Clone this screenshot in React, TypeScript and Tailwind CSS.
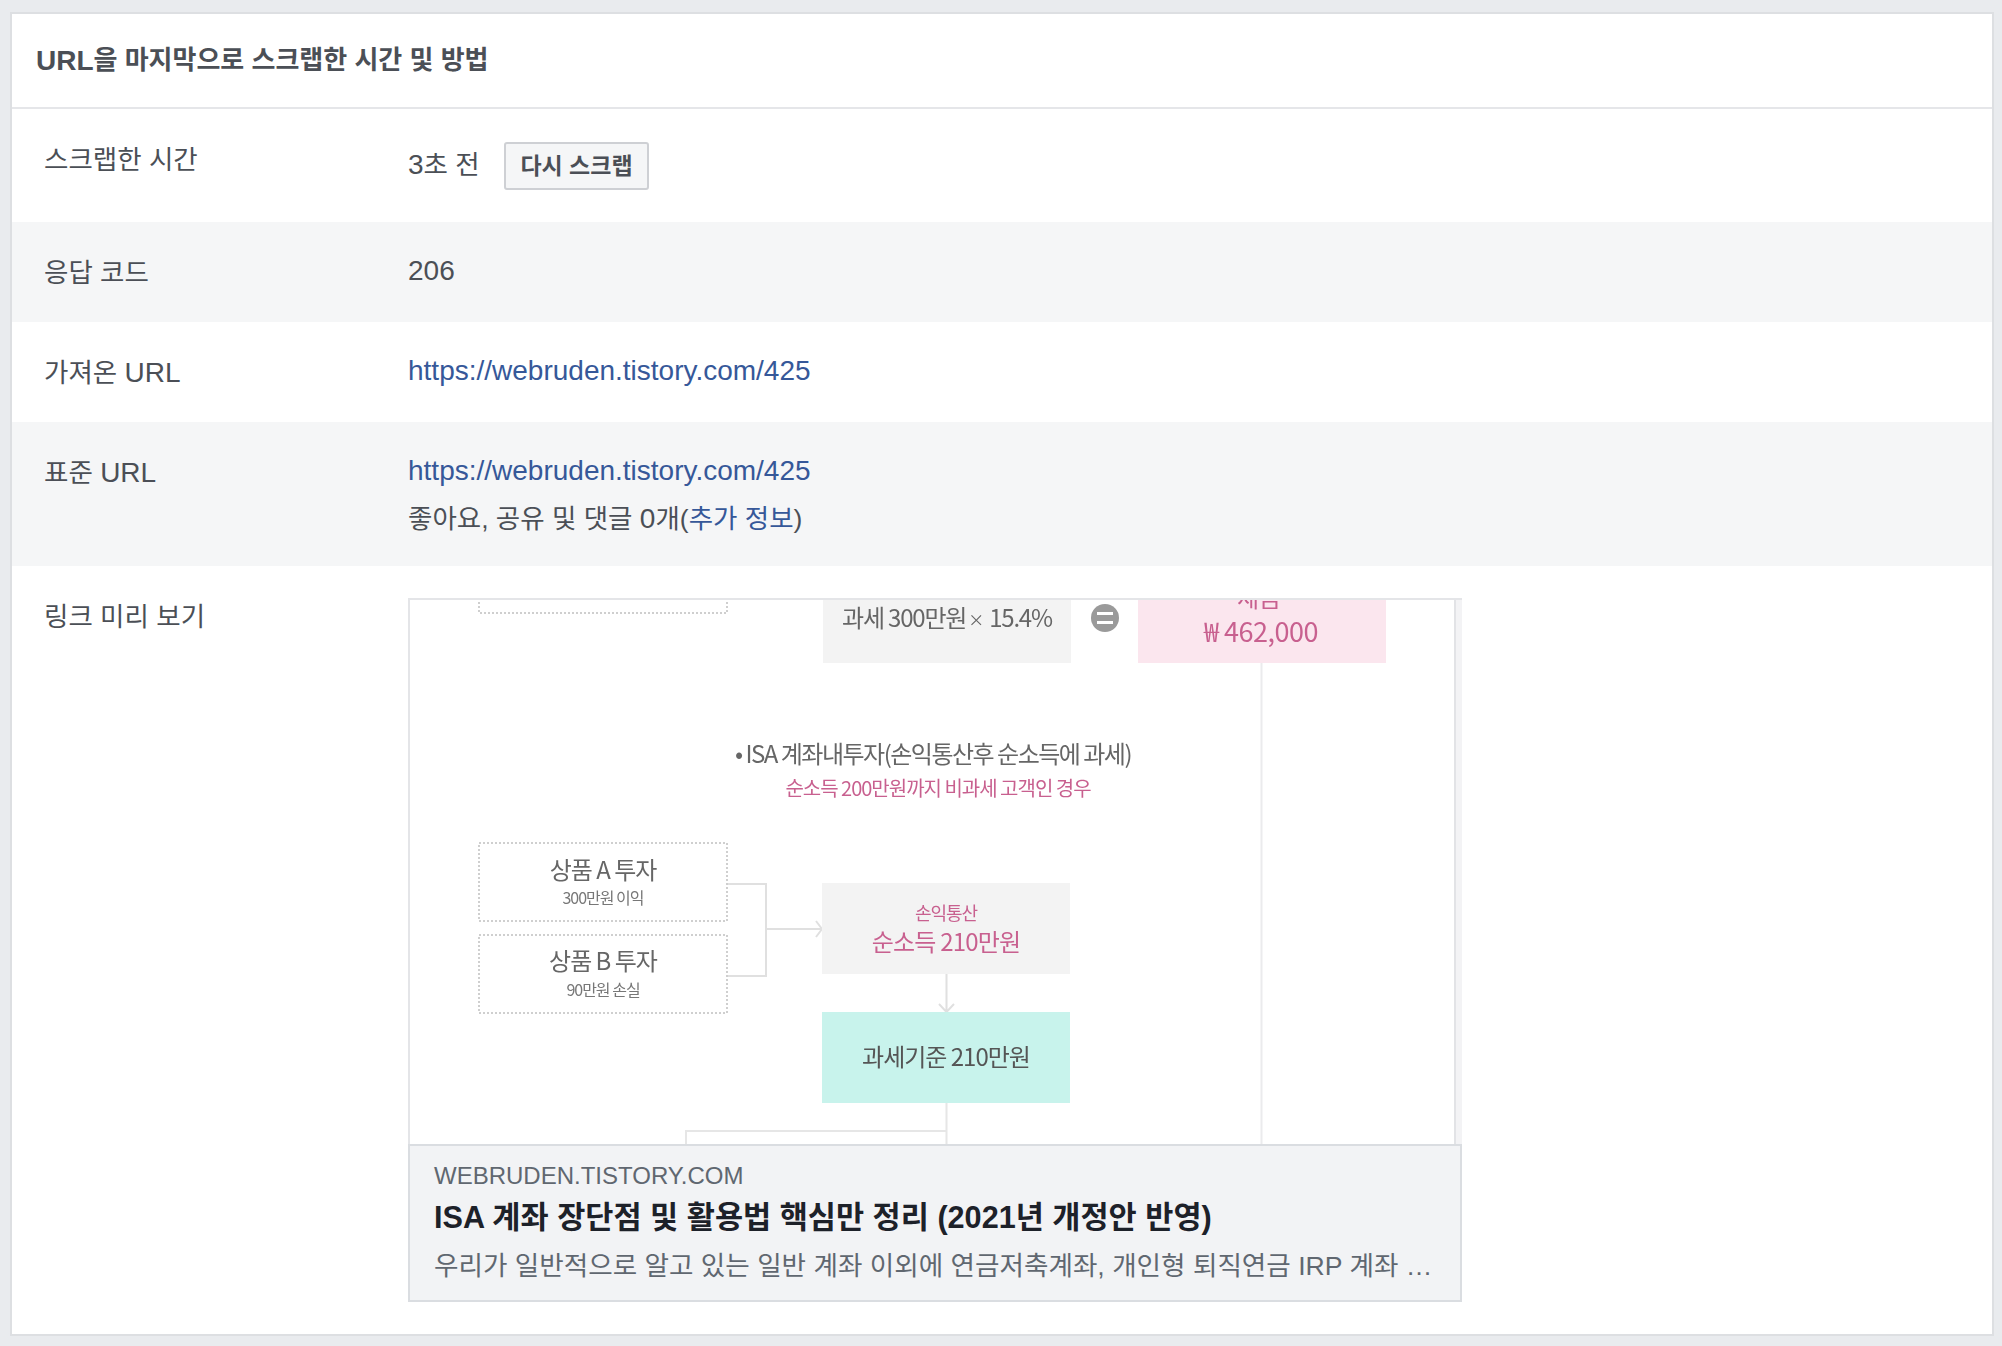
import React from "react";

const FONT = '"Liberation Sans", "Noto Sans CJK KR", sans-serif';

// latin runs sit a bit larger than the korean around them in the reference
function L({ children }: { children: React.ReactNode }) {
  return <span className="text-[28px]">{children}</span>;
}

function Row({ label, shaded, h, children }: { label: React.ReactNode; shaded?: boolean; h: string; children: React.ReactNode }) {
  return (
    <div className={`flex ${h} ${shaded ? "bg-[#f5f6f7]" : "bg-white"}`}>
      <div className="w-[396px] shrink-0 pl-[32px] pt-[31px] text-[26.5px] leading-[40px] text-[#4b4f56]">{label}</div>
      <div className="min-w-0 flex-1 pt-[29px] text-[26.5px] leading-[40px] text-[#4b4f56]">{children}</div>
    </div>
  );
}

function PreviewDiagram() {
  const textFont = { fontFamily: '"Noto Sans CJK KR", sans-serif' };
  return (
    <svg viewBox="408 598 1054 546" className="block h-[546px] w-[1054px] blur-[0.5px]" style={textFont}>
      <rect x="408" y="598" width="1054" height="546" fill="#fff" />
      <rect x="1456" y="598" width="6" height="546" fill="#f3f3f5" />
      <line x1="1455" y1="598" x2="1455" y2="1144" stroke="#e2e3e6" strokeWidth="2" />
      {/* top row */}
      <path d="M479 598V613H727V598" fill="none" stroke="#cfcfcf" strokeWidth="2" strokeDasharray="2 2" />
      <rect x="823" y="598" width="248" height="65" fill="#f3f3f3" />
      <text x="947" y="627" textAnchor="middle" fontSize="24" fill="#666" letterSpacing="-1.2">
        과세 300만원<tspan fontSize="16" dx="2" dy="-1">×</tspan><tspan dx="2" dy="1"> 15.4%</tspan>
      </text>
      <circle cx="1105" cy="618" r="14" fill="#9a9a9a" />
      <rect x="1097" y="612" width="16" height="3" fill="#fff" />
      <rect x="1097" y="621" width="16" height="3" fill="#fff" />
      <rect x="1138" y="598" width="248" height="65" fill="#fbe6ee" />
      <text x="1259" y="607" textAnchor="middle" fontSize="24" fill="#c8608f">세금</text>
      <text x="1261" y="642" textAnchor="middle" fontSize="27" fill="#c8608f" letterSpacing="-0.5">₩ 462,000</text>
      <line x1="1261.5" y1="663" x2="1261.5" y2="1144" stroke="#ebebed" strokeWidth="2" />
      {/* heading */}
      <text x="933" y="763" textAnchor="middle" fontSize="24" fill="#666" letterSpacing="-1.5">• ISA 계좌내투자(손익통산후 순소득에 과세)</text>
      <text x="938" y="796" textAnchor="middle" fontSize="20" fill="#c8608f" letterSpacing="-1">순소득 200만원까지 비과세 고객인 경우</text>
      {/* products */}
      <rect x="479" y="843" width="248" height="78" fill="#fff" stroke="#cfcfcf" strokeWidth="2" strokeDasharray="2 2" />
      <text x="603" y="879" textAnchor="middle" fontSize="24" fill="#666" letterSpacing="-1">상품 A 투자</text>
      <text x="603" y="904" textAnchor="middle" fontSize="16" fill="#777" letterSpacing="-1">300만원 이익</text>
      <rect x="479" y="935" width="248" height="78" fill="#fff" stroke="#cfcfcf" strokeWidth="2" strokeDasharray="2 2" />
      <text x="603" y="970" textAnchor="middle" fontSize="24" fill="#666" letterSpacing="-1">상품 B 투자</text>
      <text x="603" y="996" textAnchor="middle" fontSize="16" fill="#777" letterSpacing="-1">90만원 손실</text>
      {/* connectors */}
      <path d="M728 884H766V976H728M766 929H822M816 921L822 929L816 937" fill="none" stroke="#e0e0e0" strokeWidth="2" />
      <rect x="822" y="883" width="248" height="91" fill="#f3f3f3" />
      <text x="946" y="920" textAnchor="middle" fontSize="18" fill="#c8608f" letterSpacing="-1">손익통산</text>
      <text x="946" y="951" textAnchor="middle" fontSize="24" fill="#c8608f" letterSpacing="-0.8">순소득 210만원</text>
      <path d="M946.5 974V1012M939 1004L946.5 1012L954 1004" fill="none" stroke="#e0e0e0" strokeWidth="2" />
      <rect x="822" y="1012" width="248" height="91" fill="#c8f3ec" />
      <text x="946" y="1066" textAnchor="middle" fontSize="24" fill="#555" letterSpacing="-1">과세기준 210만원</text>
      <path d="M946.5 1103V1144M686 1144V1131H946" fill="none" stroke="#e6e6e6" strokeWidth="2" />
      {/* image edges */}
      <line x1="408" y1="599" x2="1462" y2="599" stroke="#e4e5e8" strokeWidth="2" />
      <line x1="409" y1="598" x2="409" y2="1144" stroke="#e4e5e8" strokeWidth="2" />
    </svg>
  );
}

export default function App() {
  return (
    <div className="h-[1346px] overflow-hidden bg-[#e9ebee] pl-[10px] pr-[8px] pt-[12px]" style={{ fontFamily: FONT }}>
      <div className="h-[1324px] border-2 border-[#dddfe2] bg-white">
        <div className="flex h-[95px] items-center border-b-2 border-[#e5e6e9] pl-[24px] text-[26px] font-bold text-[#4b4f56]">
          <L>URL</L>을 마지막으로 스크랩한 시간 및 방법
        </div>
        <Row label="스크랩한 시간" h="h-[113px]">
          <div className="flex items-start">
            <span className="mt-[7px] w-[96px]">
              <L>3</L>초 전
            </span>
            <button className="mt-[4px] h-[48px] w-[145px] rounded-[3px] border-2 border-[#ced0d4] bg-[#f5f6f7] text-[23px] font-bold leading-none text-[#4b4f56]">
              다시 스크랩
            </button>
          </div>
        </Row>
        <Row label="응답 코드" shaded h="h-[100px]">
          <L>206</L>
        </Row>
        <Row label={<>가져온 <L>URL</L></>} h="h-[100px]">
          <a className="text-[28px] text-[#365899]">https://webruden.tistory.com/425</a>
        </Row>
        <Row label={<>표준 <L>URL</L></>} shaded h="h-[144px]">
          <a className="block text-[28px] text-[#365899]">https://webruden.tistory.com/425</a>
          <div className="mt-[8px]">
            좋아요, 공유 및 댓글 <L>0</L>개(<a className="text-[#365899]">추가 정보</a>)
          </div>
        </Row>
        <Row label="링크 미리 보기" h="h-[768px]">
          <div className="mt-[3px] w-[1054px]">
            <PreviewDiagram />
            <div className="h-[158px] border-2 border-[#dadde1] bg-[#f2f3f5] px-[24px] pt-[14px]">
              <div className="text-[24px] leading-[32px] text-[#606770]">WEBRUDEN.TISTORY.COM</div>
              <div className="mt-[5px] truncate text-[30.6px] font-bold leading-[40px] text-[#1d2129]">
                ISA 계좌 장단점 및 활용법 핵심만 정리 (2021년 개정안 반영)
              </div>
              <div className="mt-[9px] truncate text-[26.6px] leading-[40px] text-[#606770]">
                우리가 일반적으로 알고 있는 일반 계좌 이외에 연금저축계좌, 개인형 퇴직연금 IRP 계좌 …
              </div>
            </div>
          </div>
        </Row>
      </div>
    </div>
  );
}
